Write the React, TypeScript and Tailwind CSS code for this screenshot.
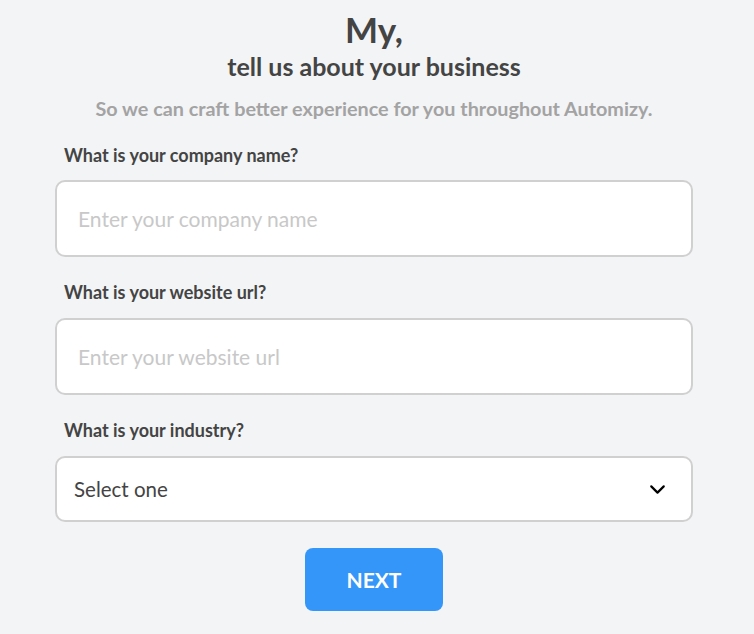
import React from 'react';
import { ChevronDown } from 'lucide-react';

const font = { fontFamily: 'Lato, "Noto Sans", sans-serif' };

function Label({ children }: { children: React.ReactNode }) {
  return <label className="block pl-[9px] text-[18px] font-bold leading-[22px] text-[#444444]">{children}</label>;
}

function Field({ label, placeholder, top, gap }: { label: string; placeholder: string; top: string; gap: string }) {
  return (
    <div className={top}>
      <Label>{label}</Label>
      <input
        placeholder={placeholder}
        className={`${gap} block h-[77px] w-full rounded-[10px] border-2 border-[#d0d0d0] bg-white px-[21px] text-[21px] text-[#444444] outline-none placeholder:text-[#c8c8c8]`}
        style={font}
      />
    </div>
  );
}

export default function App() {
  return (
    <div className="min-h-[634px] w-full bg-[#f3f4f6]" style={font}>
      <div className="ml-[55px] w-[638px] pt-[9px]">
        <div className="text-center">
          <h1 className="text-[35px] font-bold leading-[40px] text-[#444444]">My,</h1>
          <h2 className="mt-[2px] text-[25px] font-bold leading-[30px] text-[#444444]">tell us about your business</h2>
          <p className="mt-[15px] text-[19.8px] font-bold leading-[24px] text-[#a3a3a3]">
            So we can craft better experience for you throughout Automizy.
          </p>
        </div>

        <Field label="What is your company name?" placeholder="Enter your company name" top="mt-[24px]" gap="mt-[14px]" />
        <Field label="What is your website url?" placeholder="Enter your website url" top="mt-[24px]" gap="mt-[15px]" />

        <div className="mt-[24px]">
          <Label>What is your industry?</Label>
          <div className="mt-[15px] flex h-[66px] w-full items-center justify-between rounded-[10px] border-2 border-[#d0d0d0] bg-white pl-[17px] pr-[21px]">
            <span className="text-[20.5px] text-[#444444]">Select one</span>
            <ChevronDown className="h-[25px] w-[25px] text-black" strokeWidth={2.1} />
          </div>
        </div>

        <div className="mt-[26px] flex justify-center">
          <button className="h-[63px] w-[138px] rounded-[8px] bg-[#3596fa] text-[21px] font-bold text-white">NEXT</button>
        </div>
      </div>
    </div>
  );
}
